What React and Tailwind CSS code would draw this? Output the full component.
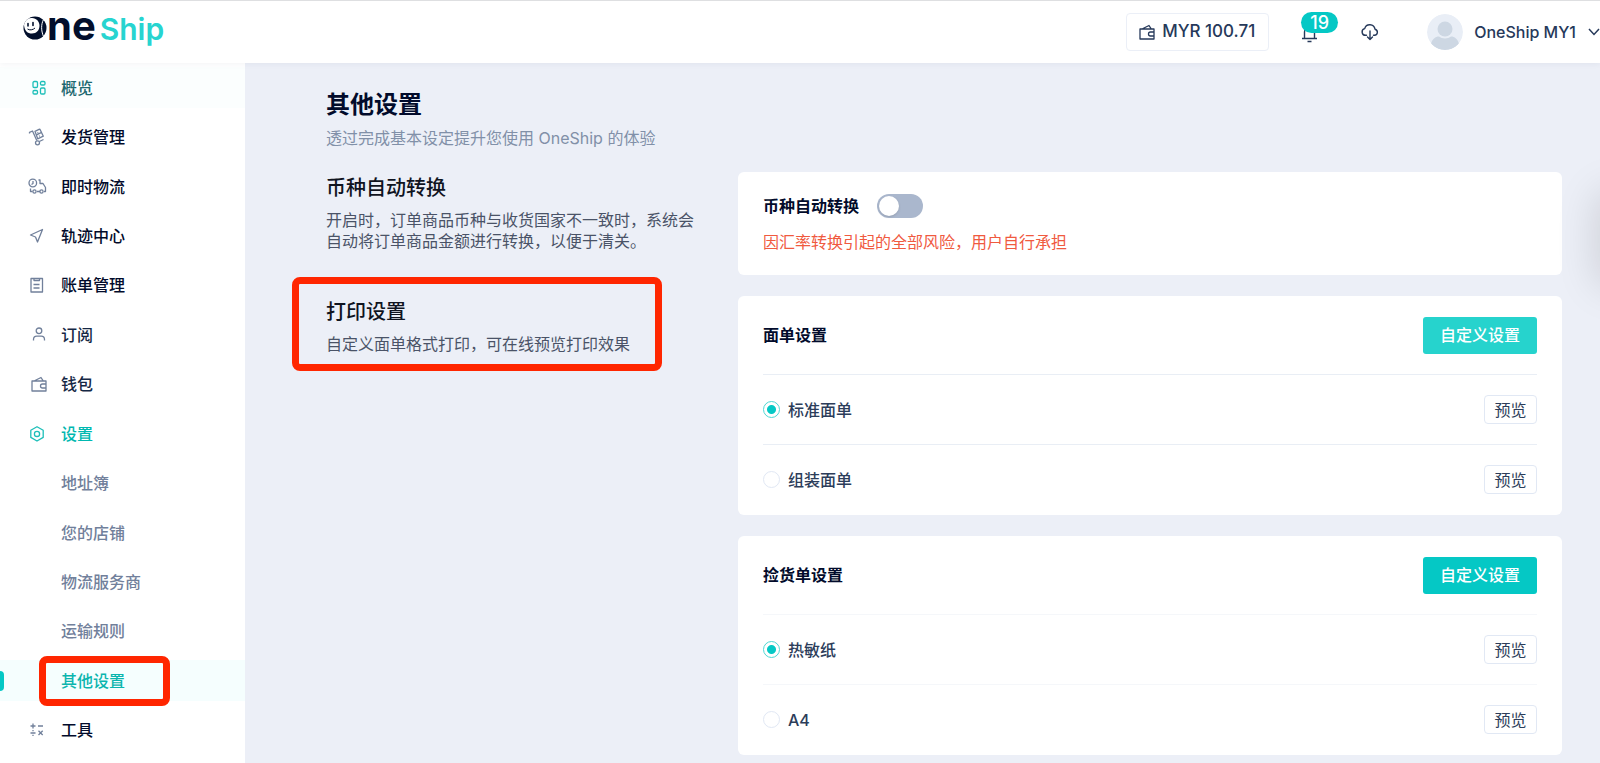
import React, { useState } from 'react';

const iconPaths = {
    overview: (
        <>
            <rect x="5" y="2.500" width="4.500" height="6" rx="1.200" />
            <rect x="12.500" y="2.500" width="4.500" height="3.500" rx="1.200" />
            <rect x="5" y="11.500" width="4.500" height="3.500" rx="1.200" />
            <rect x="12.500" y="9" width="4.500" height="6" rx="1.200" />
        </>
    ),
    delivery: (
        <>
            <path d="M1.500 5.500V4.300L4.500 3l4.300 9.500M11.300 13.500l4.200-2" />
            <path d="m7 3.300 4-1.900a1 1 0 0 1 1.300.5l3 6.300-5.600 2.600z" />
            <path d="m8.500 6.800 5.200-2.400M9.500 4.800l.8-.4M11 8.200l.8-.4" />
            <circle cx="9.500" cy="14.800" r="2" />
        </>
    ),
    instant: (
        <>
            <circle cx="4.800" cy="5" r="3.800" />
            <path d="M5 3v2.500L3.500 6.500M10.500 2H12v3.500h3l2.500 4v4h-1.500M2.500 10.500V13.500h2M9 13.500h3" />
            <circle cx="6.500" cy="13.500" r="1.600" />
            <circle cx="13.500" cy="13.500" r="1.600" />
        </>
    ),
    track: <path d="m2.500 8 12-5.500L9.500 15 7.500 10z" />,
    bill: (
        <>
            <path d="M3 2.500h11.500v13.500H3z" />
            <path d="M6 2.500v2h5.500v-2M5.500 8.500h6M5.500 12h6" />
        </>
    ),
    user: (
        <>
            <circle cx="11" cy="4.800" r="2.800" />
            <path d="M5.500 14.500v-1a3.300 3.300 0 0 1 3.300-3.300h4.400a3.300 3.300 0 0 1 3.300 3.300v1" />
        </>
    ),
    wallet: <path d="M4 6h14v10H4zM6 6l7-3.500 2.200 3.300M18 9h-3.500a2 2 0 0 0 0 4h3.500" />,
    settings: (
        <>
            <path d="m9 1.700 6.200 3.500v7.200L9 16l-6.200-3.600V5.200z" />
            <circle cx="9" cy="8.900" r="2.600" />
        </>
    ),
    tools: <path d="M2.500 5h5M5 2.500v5M10 5h5M2.500 12h5M5 9v1.200M5 13.800V15M10.500 9.800l4.200 4.200M14.700 9.800l-4.200 4.200" />,
};

const menuItems = [
    { label: '概览', icon: 'overview', tone: 'overview' },
    { label: '发货管理', icon: 'delivery', tone: 'strong' },
    { label: '即时物流', icon: 'instant', tone: 'strong' },
    { label: '轨迹中心', icon: 'track', tone: 'strong' },
    { label: '账单管理', icon: 'bill', tone: 'strong' },
    { label: '订阅', icon: 'user', tone: 'normal' },
    { label: '钱包', icon: 'wallet', tone: 'normal' },
    { label: '设置', icon: 'settings', tone: 'open' },
    { label: '地址簿', tone: 'sub' },
    { label: '您的店铺', tone: 'sub' },
    { label: '物流服务商', tone: 'sub' },
    { label: '运输规则', tone: 'sub' },
    { label: '其他设置', tone: 'active' },
    { label: '工具', icon: 'tools', tone: 'strong' },
];

const toneClasses = {
    overview: 'bg-[#fbfefe] text-[#1d6870]',
    strong: 'text-[#020b2b]',
    normal: 'text-[#152744]',
    open: 'text-[#00b8b0]',
    sub: 'text-[#71809b]',
    active: 'bg-[#f5fefe] text-[#0bb5ae]',
};

const printCards = [
    { title: '面单设置', name: 'label', buttonClass: 'bg-[#26d3cd]', lineClass: 'border-[#e9eef5]', options: ['标准面单', '组装面单'] },
    { title: '捡货单设置', name: 'picking', buttonClass: 'bg-[#05c8c5]', lineClass: 'border-[#f5f7fa]', options: ['热敏纸', 'A4'] },
];

function Icon({ name, className = '' }) {
    return (
        <svg viewBox="0 0 20 18" fill="none" stroke="currentColor" strokeWidth="1.3" strokeLinejoin="round" className={`h-[18px] w-5 shrink-0 ${className}`} aria-hidden="true">
            {iconPaths[name]}
        </svg>
    );
}

function Logo() {
    return (
        <a href="#home" aria-label="One Ship" className="mb-1 flex h-10 items-baseline font-[Inter] leading-8">
            <svg viewBox="0 0 24 24" className="h-6 w-6" aria-hidden="true">
                <circle cx="12" cy="12" r="11.500" fill="#020f2c" />
                <path d="M1 9C2 4.500 5 1.500 9 2c4.500.3 7.500 3.500 7.500 7.500 0 4.800-3 8-7.500 8-4.500 0-7.500-2.500-8-8.500z" fill="#fff" />
                <path d="M5 7.500v2.500M10 6.500v3" stroke="#020f2c" strokeWidth="1.600" strokeLinecap="round" />
                <path d="M4.500 13c2 1.500 5.500 1 7.500-1" stroke="#020f2c" strokeWidth="1" fill="none" />
                <path d="M20.500 3.500c-2.500 5-2.500 11 0 17" stroke="#fff" strokeWidth="1" fill="none" />
            </svg>
            <span className="text-[40px] font-bold text-[#020f2c]">ne</span>
            <span className="ml-1 text-[30px] font-semibold text-[#27d4d0]">Ship</span>
        </a>
    );
}

function Header() {
    return (
        <header className="relative z-10 flex h-[63px] items-center overflow-hidden border-t border-[#dedfe1] bg-white pl-[23px] text-[#26395a] shadow-[0_1px_6px_rgba(30,50,80,0.06)]">
            <Logo />
            <div className="ml-auto flex shrink-0 items-center">
                <button type="button" className="flex h-[38px] w-[143px] items-center justify-center gap-[6px] rounded border border-[#ebeff7] text-[17px] font-medium">
                    <Icon name="wallet" className="-ml-1" />
                    MYR 100.71
                </button>
                <button type="button" aria-label="通知" className="relative ml-8 flex h-10 w-9 justify-start">
                    <svg viewBox="0 0 18 18" fill="none" stroke="currentColor" strokeWidth="1.400" className="mt-[13px] h-[18px] w-[18px]" aria-hidden="true">
                        <path d="M1 13.500h15M3.500 13.500V7a5 5 0 0 1 10 0v6.500M6.500 16.500h4" />
                    </svg>
                    <span className="absolute top-0 left-0 flex h-[21px] w-[37px] items-center justify-center rounded-full bg-[#05c8c5] text-lg font-medium text-white">19</span>
                </button>
                <button type="button" aria-label="下载" className="ml-6">
                    <svg viewBox="0 0 18 18" fill="none" stroke="currentColor" strokeWidth="1.400" strokeLinecap="round" strokeLinejoin="round" className="h-[18px] w-[18px]" aria-hidden="true">
                        <path d="M5.500 12.300H4.500a3.400 3.400 0 0 1-.8-6.700A5.300 5.300 0 0 1 14 6.200a3.100 3.100 0 0 1-.5 6.100h-1" />
                        <path d="M9 8v8.500M6.500 14 9 16.500l2.500-2.500" />
                    </svg>
                </button>
                <button type="button" className="ml-12 flex items-center font-medium">
                    <svg viewBox="0 0 36 36" className="mr-[11px] h-9 w-9 rounded-full" aria-hidden="true">
                        <circle cx="18" cy="18" r="18" fill="#e9eef6" />
                        <circle cx="18" cy="15" r="7.500" fill="#cdd7e3" />
                        <path d="M4 30c1-5 4.500-7.500 8-7.500 3 2.500 9 2.500 12 0 3.500 0 7 2.500 8 7.500-7 8-21 8-28 0z" fill="#cdd7e3" />
                    </svg>
                    OneShip MY1
                    <svg viewBox="0 0 12 8" fill="none" stroke="currentColor" strokeWidth="1.500" className="ml-3 h-2 w-3" aria-hidden="true">
                        <path d="m1 1 5 5.500L11 1" />
                    </svg>
                </button>
            </div>
        </header>
    );
}

function Sidebar() {
    return (
        <nav className="grid w-[245px] shrink-0 auto-rows-fr items-center bg-white pb-2">
            {menuItems.map((item) => (
                <a key={item.label} href={`#${item.label}`} className={`relative flex h-[41px] items-center pl-7 font-medium ${toneClasses[item.tone]}`}>
                    {item.tone === 'active' && (
                        <>
                            <span className="absolute left-0 h-5 w-1 rounded-r bg-[#05c8c5]" />
                            <span className="absolute -top-1 left-[39px] h-[50px] w-[131px] rounded-lg border-[7px] border-[#ff2600]" />
                        </>
                    )}
                    <span className="w-[33px]">
                        {item.icon && <Icon name={item.icon} className={item.tone === 'open' || item.tone === 'overview' ? 'text-[#1dbfb9]' : 'text-[#71809b]'} />}
                    </span>
                    {item.label}
                </a>
            ))}
        </nav>
    );
}

function PrintCard({ card }) {
    const [selected, setSelected] = useState(card.options[0]);

    return (
        <fieldset className="rounded-md bg-white px-[25px] pb-px">
            <div className="flex h-[78px] items-center justify-between">
                <h3 className="font-bold text-[#020b2b]">{card.title}</h3>
                <button type="button" className={`h-[37px] w-[114px] rounded-[3px] font-medium text-white ${card.buttonClass}`}>自定义设置</button>
            </div>
            {card.options.map((option) => (
                <div key={option} className={`flex h-[70px] items-center justify-between border-t ${card.lineClass}`}>
                    <label className="flex items-center gap-2 font-medium text-[#2c3d5a]">
                        <input
                            type="radio"
                            name={card.name}
                            checked={selected === option}
                            onChange={() => setSelected(option)}
                            className="h-[17px] w-[17px] appearance-none rounded-full border border-[#e1e8f4] checked:border-[#4fd8d4] checked:bg-[radial-gradient(circle,#05c8c5_4px,transparent_5px)]"
                        />
                        {option}
                    </label>
                    <button type="button" className="h-[29px] w-[53px] rounded border border-[#e1e8f4] text-[#2c3d5a]">预览</button>
                </div>
            ))}
        </fieldset>
    );
}

export default function App() {
    const [autoConvert, setAutoConvert] = useState(false);

    return (
        <div className="flex min-h-screen flex-col overflow-x-hidden bg-[#eceff7] font-[Inter,'Noto_Sans_CJK_SC',sans-serif] text-base">
            <Header />
            <div className="flex flex-1">
                <Sidebar />
                <main className="min-w-0 flex-1 pt-[26px] pr-[38px] pl-[81px]">
                    <h1 className="text-2xl leading-8 font-bold text-[#020b2b]">其他设置</h1>
                    <p className="mt-[3px] leading-7 text-[#8190a8]">透过完成基本设定提升您使用 OneShip 的体验</p>
                    <div className="mt-5 flex">
                        <div className="w-[412px] shrink-0 pt-[2px]">
                            <section className="h-[103px]">
                                <h2 className="text-xl leading-7 font-medium text-[#10141f]">币种自动转换</h2>
                                <p className="mt-2 w-[380px] leading-[21px] text-[#4a5367]">开启时，订单商品币种与收货国家不一致时，系统会自动将订单商品金额进行转换，以便于清关。</p>
                            </section>
                            <section className="relative mt-[21px]">
                                <span className="absolute -top-[21px] -left-[34px] h-[94px] w-[370px] rounded-lg border-[7px] border-[#ff2600]" />
                                <h2 className="text-xl leading-7 font-medium text-[#10141f]">打印设置</h2>
                                <p className="mt-2 leading-[21px] text-[#4a5367]">自定义面单格式打印，可在线预览打印效果</p>
                            </section>
                        </div>
                        <div className="flex min-w-0 flex-1 flex-col gap-[21px]">
                            <section className="h-[103px] rounded-md bg-white px-[25px] pt-[22px]">
                                <label className="flex items-center gap-[18px] leading-6 font-bold text-[#020b2b]">
                                    币种自动转换
                                    <input
                                        type="checkbox"
                                        role="switch"
                                        checked={autoConvert}
                                        onChange={(event) => setAutoConvert(event.target.checked)}
                                        className="h-6 w-[46px] appearance-none rounded-full bg-[#aab7cd] p-[2px] before:block before:h-5 before:w-5 before:rounded-full before:bg-white before:shadow checked:bg-[#05c8c5] checked:before:ml-[22px]"
                                    />
                                </label>
                                <p className="mt-3 leading-6 text-[#f05a3f]">因汇率转换引起的全部风险，用户自行承担</p>
                            </section>
                            {printCards.map((card) => (
                                <PrintCard key={card.name} card={card} />
                            ))}
                        </div>
                    </div>
                </main>
            </div>
            <aside className="fixed top-[195px] left-full h-[88px] w-12 rounded-lg bg-white shadow-[0_0_40px_4px_rgba(0,0,0,0.13)]" />
        </div>
    );
}
